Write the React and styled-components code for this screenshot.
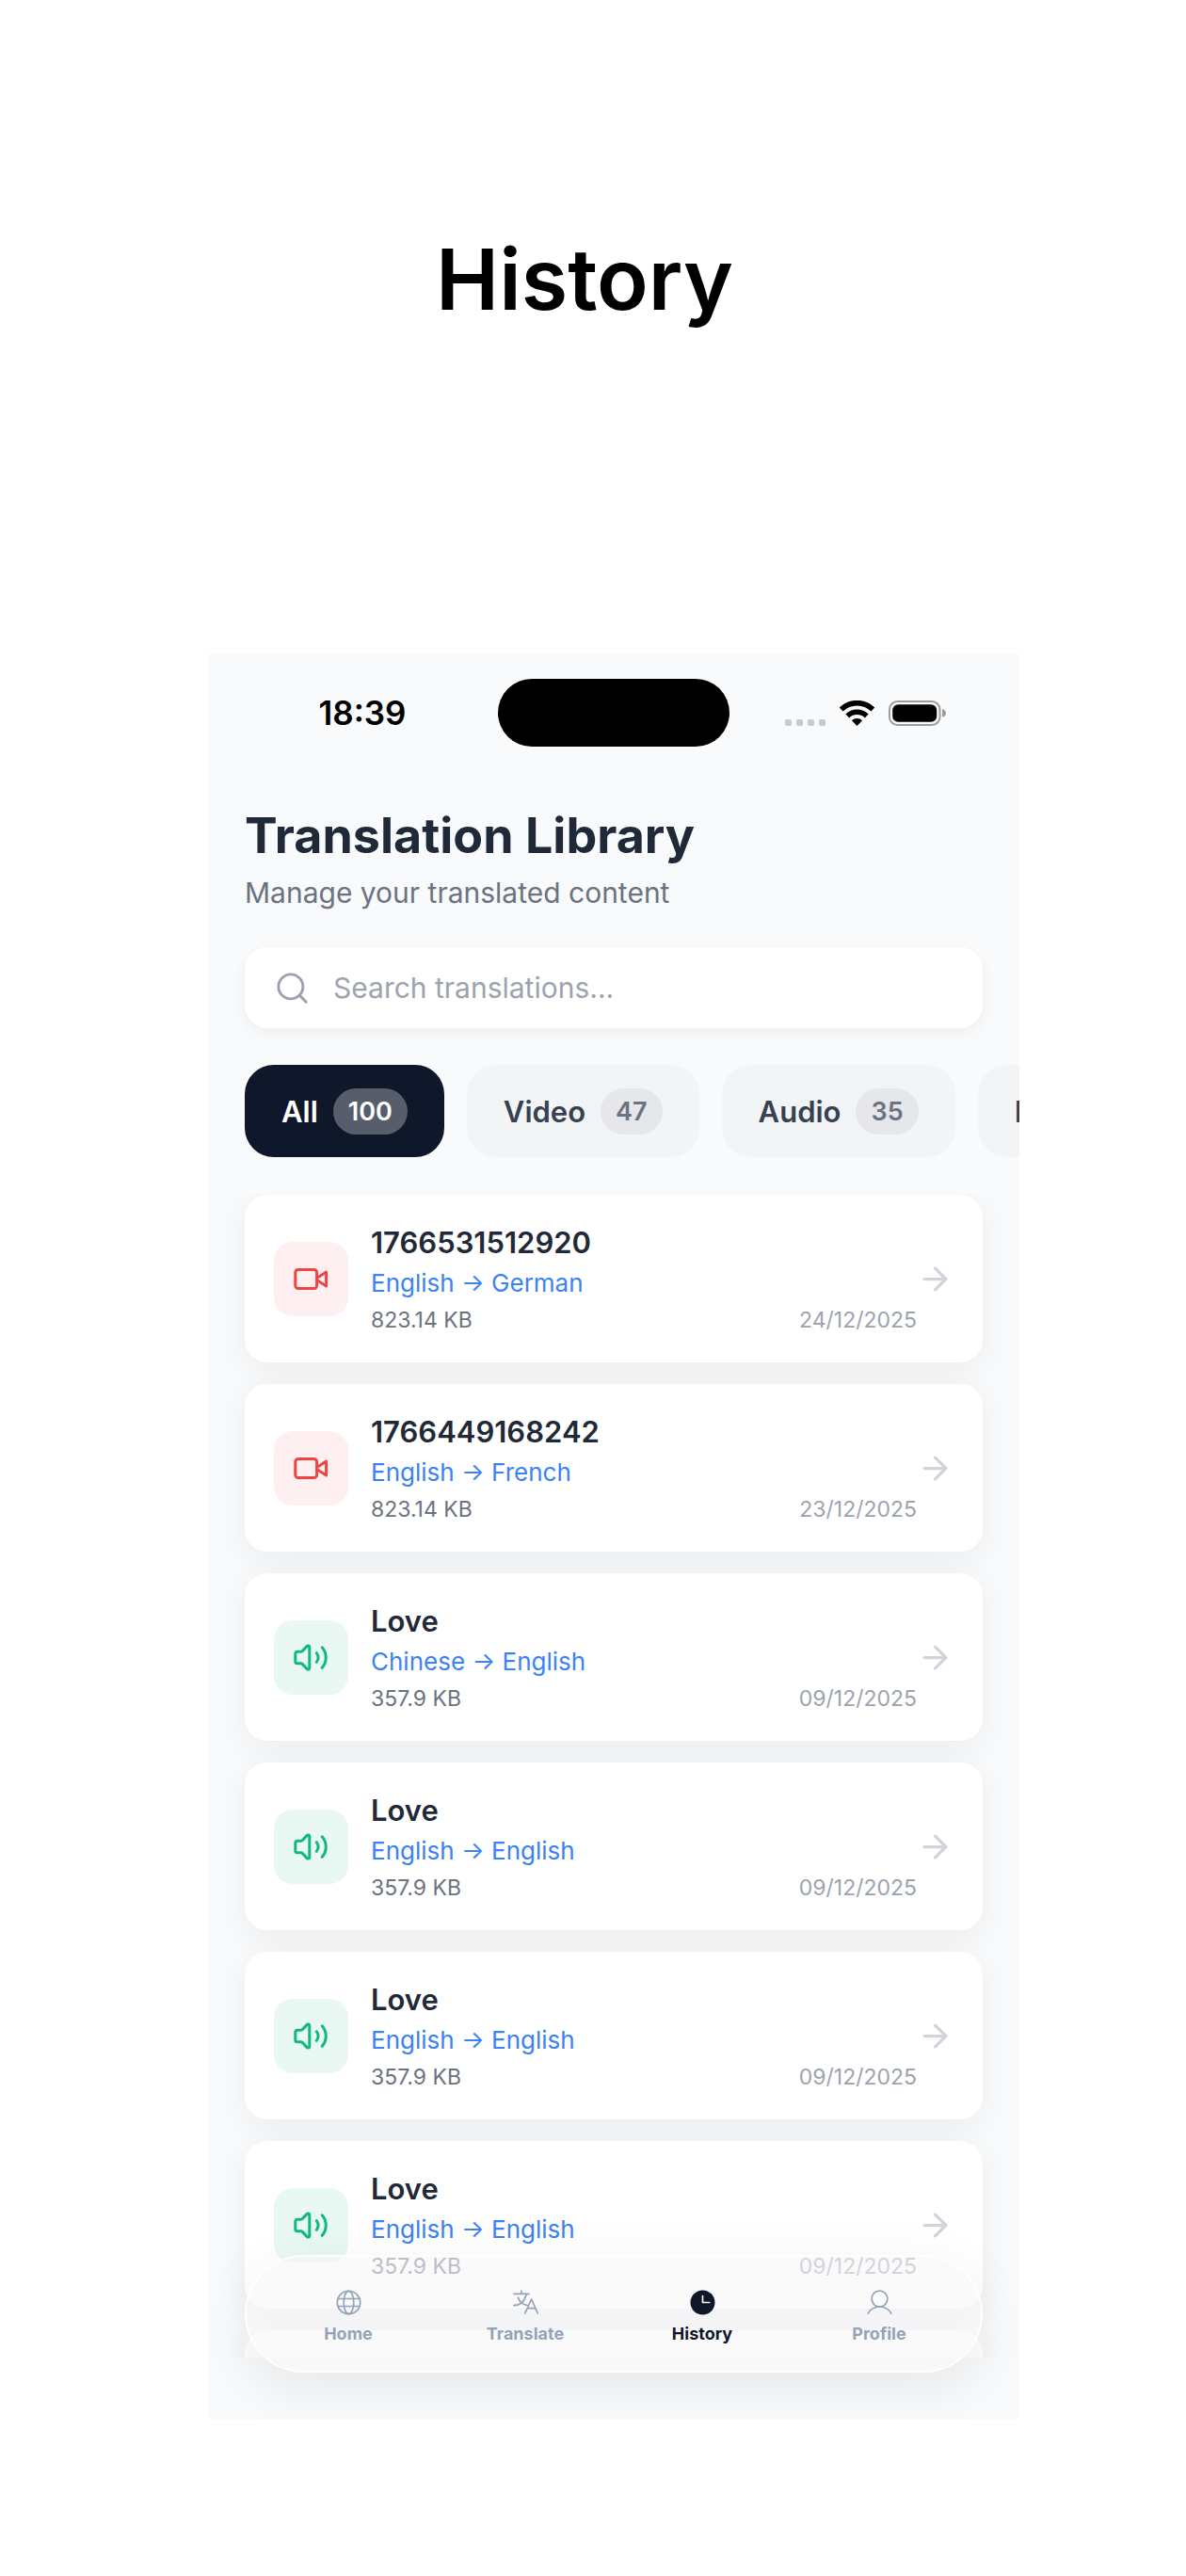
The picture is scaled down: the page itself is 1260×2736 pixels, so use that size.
import React, { useState } from 'react';
import styled, { createGlobalStyle, ThemeProvider } from 'styled-components';
import { ArrowRight, Search } from 'lucide-react';

const theme = {
    body: '#f9fafc',
    ink: '#1f2937',
    navy: '#0f172a',
    muted: '#6b7280',
    faint: '#9ca3af',
    slate: '#94a3b8',
    blue: '#3b82f6',
    size: ['18px', '23px', '26px', '30px', '31px', '35px', '52px', '90px'],
    kinds: {
        video: { color: '#ef4444', background: '#feeff0' },
        audio: { color: '#10b981', background: '#e9f8f3' },
    },
}

const GlobalStyle = createGlobalStyle`
    * {
        box-sizing: border-box;
    }
    body {
        margin: 0;
        background: #fff;
        font-family: Inter, "Liberation Sans", sans-serif;
    }
    button, input {
        font-family: inherit;
        border: 0;
    }
    svg {
        display: block;
        flex-shrink: 0;
    }
`

const Page = styled.div`
    padding: 244px 177px 167px 221px;
`

const PageTitle = styled.h1`
    margin: 0 62px 344px 0;
    font-size: ${p => p.theme.size[7]};
    line-height: 106px;
    font-weight: 600;
    text-align: center;
    color: #000;
`

const Screen = styled.main`
    position: relative;
    overflow: hidden;
    padding-bottom: 65px;
    background: ${p => p.theme.body};
`

const StatusBar = styled.div`
    display: grid;
    grid-template-columns: 1fr 246px 1fr;
    align-items: center;
    padding-top: 27px;
`

const Time = styled.span`
    padding-left: 20px;
    text-align: center;
    font-size: ${p => p.theme.size[5]};
    font-weight: 600;
    color: #000;
`

const Island = styled.div`
    height: 72px;
    border-radius: 36px;
    background: #000;
`

const StatusIcons = styled.div`
    display: flex;
    justify-content: center;
    align-items: flex-end;
    gap: 15px;
    padding-right: 20px;
`

const Signal = styled.div`
    display: flex;
    gap: 5px;
    span {
        width: 7px;
        height: 7px;
        border-radius: 2px;
        background: #c9cacc;
    }
`

const Head = styled.header`
    display: flex;
    flex-direction: column;
    gap: 8px;
    padding: 62px 39px 39px;
`

const Title = styled.h2`
    margin: 0;
    font-size: ${p => p.theme.size[6]};
    line-height: 66px;
    font-weight: 700;
    color: ${p => p.theme.ink};
`

const SubTitle = styled.p`
    margin: 0;
    font-size: ${p => p.theme.size[3]};
    line-height: 38px;
    color: ${p => p.theme.muted};
`

const SearchBox = styled.label`
    display: flex;
    align-items: center;
    gap: 24px;
    height: 86px;
    margin: 0 39px;
    padding: 0 31px;
    border-radius: 24px;
    background: #fff;
    color: ${p => p.theme.faint};
    box-shadow: 0 4px 16px rgba(0, 0, 0, .05);
`

const SearchInput = styled.input`
    flex: 1;
    min-width: 0;
    padding: 0;
    outline: none;
    background: transparent;
    font-size: ${p => p.theme.size[3]};
    color: ${p => p.theme.ink};
    &::placeholder {
        color: ${p => p.theme.faint};
        opacity: 1;
    }
`

const Filters = styled.div`
    display: flex;
    gap: 24px;
    padding: 39px 39px 40px;
    overflow: hidden;
`

const Chip = styled.button`
    display: flex;
    flex-shrink: 0;
    align-items: center;
    gap: 16px;
    height: 98px;
    padding: 0 39px;
    border-radius: 31px;
    font-size: ${p => p.theme.size[4]};
    font-weight: 600;
    background: ${p => p.$active ? p.theme.navy : '#f3f4f6'};
    color: ${p => p.$active ? '#fff' : '#374151'};
`

const Count = styled.span`
    padding: 0 16px;
    border-radius: 25px;
    font-size: 27px;
    line-height: 49px;
    background: ${p => p.$active ? 'rgba(255, 255, 255, .3)' : '#e5e7eb'};
    color: ${p => p.$active ? '#fff' : p.theme.muted};
`

const List = styled.ul`
    display: flex;
    flex-direction: column;
    gap: 23px;
    max-height: 1235px;
    margin: 0;
    padding: 0 39px;
    overflow-y: auto;
    list-style: none;
    scrollbar-width: none;
`

const Card = styled.li`
    display: flex;
    flex-shrink: 0;
    align-items: center;
    padding: 0 31px;
    border-radius: 24px;
    background: #fff;
    box-shadow: 0 8px 36px rgba(0, 0, 0, .06);
`

const Tile = styled.div`
    display: grid;
    place-items: center;
    width: 79px;
    height: 79px;
    margin-right: 24px;
    border-radius: 20px;
    color: ${p => p.theme.kinds[p.$kind].color};
    background: ${p => p.theme.kinds[p.$kind].background};
`

const Info = styled.div`
    display: flex;
    flex: 1;
    flex-direction: column;
    gap: 7px;
    padding: 32px 0 30px;
`

const Name = styled.span`
    font-size: ${p => p.theme.size[4]};
    line-height: 38px;
    font-weight: 600;
    color: ${p => p.theme.ink};
`

const Route = styled.span`
    font-size: ${p => p.theme.size[2]};
    line-height: 34px;
    color: ${p => p.theme.blue};
`

const Meta = styled.div`
    display: flex;
    justify-content: space-between;
    font-size: ${p => p.theme.size[1]};
    line-height: 30px;
    color: ${p => p.theme.muted};
    time {
        color: ${p => p.theme.faint};
    }
`

const TabBar = styled.nav`
    position: absolute;
    left: 39px;
    right: 39px;
    bottom: 49px;
    display: flex;
    height: 125px;
    padding: 0 14px;
    border: 2px solid rgba(255, 255, 255, .8);
    border-radius: 63px;
    background: rgba(246, 247, 248, .58);
    box-shadow: 0 16px 60px rgba(0, 0, 0, .08);
`

const Tab = styled.a`
    display: flex;
    flex: 1;
    flex-direction: column;
    align-items: center;
    gap: 8px;
    padding-top: 35px;
    font-size: ${p => p.theme.size[0]};
    line-height: 24px;
    font-weight: 700;
    text-decoration: none;
    color: ${p => p.$active ? p.theme.navy : p.theme.slate};
`

const Line = ({ w = 27, h = 27, s = 2, children }) => (
    <svg width={w} height={h} viewBox={`0 0 ${w} ${h}`} fill="none" stroke="currentColor"
        strokeWidth={s} strokeLinecap="round" strokeLinejoin="round" aria-hidden="true">
        {children}
    </svg>
)

const VideoIcon = () => (
    <Line w={39} h={39} s={3}>
        <rect x="2.8" y="9.5" width="22.8" height="20" rx="3" />
        <path d="M26 18.2 35.6 12v15L26 20.8" />
    </Line>
)

const AudioIcon = () => (
    <Line w={39} h={39} s={3}>
        <path d="M4.8 13.3h3.7c.8 0 1.5-.3 2-.9l4.7-5c.9-.9 2.6-.5 2.6.9v22.4c0 1.4-1.7 1.8-2.6.9l-4.7-5c-.5-.6-1.2-.9-2-.9H4.8a2 2 0 0 1-2-2v-8.4a2 2 0 0 1 2-2Z" />
        <path d="M25.3 14.6c2.2 3.1 2.2 6.7 0 9.8" />
        <path d="M31.2 8.8c5.4 6 5.4 15.5 0 21.5" />
    </Line>
)

const Wifi = () => (
    <svg width="37" height="27" viewBox="0 0 37 27" fill="none" stroke="#000" strokeWidth="5.6" aria-hidden="true">
        <path d="M1.6 9.5a24.3 24.3 0 0 1 33.8 0" />
        <path d="M8.3 16.4a14.7 14.7 0 0 1 20.4 0" />
        <path d="M18.5 27 12.9 21.2a8 8 0 0 1 11.2 0Z" fill="#000" stroke="none" />
    </svg>
)

const Battery = () => (
    <svg width="61" height="27" viewBox="0 0 61 27" aria-hidden="true">
        <rect x="1" y="1" width="53.5" height="25" rx="8.5" fill="none" stroke="#9b9c9d" strokeWidth="2" />
        <rect x="4.2" y="4.2" width="47" height="18.6" rx="6" fill="#000" />
        <path d="M57 9.3c2.6.6 4 2.1 4 4.2s-1.4 3.6-4 4.2Z" fill="#9b9c9d" />
    </svg>
)

const HomeIcon = () => (
    <Line s={1.7}>
        <circle cx="13.5" cy="13.5" r="12.2" />
        <ellipse cx="13.5" cy="13.5" rx="5.3" ry="12.2" />
        <path d="M1.9 9.5h23.2M1.9 17.5h23.2" />
    </Line>
)

const TranslateIcon = () => (
    <Line s={1.7}>
        <path d="M.9 4.3h16.2M8.8 1.2v3.1M14.2 4.3C13 10.6 9.2 16.3.9 16.6" />
        <path d="M5.4 8.2c1.3 4 4.2 7.3 9.8 8.3" />
        <path d="M12.8 24.8 19.6 10l6.6 14.8M15.4 19.6h8.4" />
    </Line>
)

const HistoryIcon = () => (
    <Line s={1.7}>
        <circle cx="13.5" cy="13.5" r="13" fill="currentColor" stroke="none" />
        <path d="M13.5 6.5v7h7.2" stroke="#f5f5f6" />
    </Line>
)

const ProfileIcon = () => (
    <Line s={1.7}>
        <circle cx="13.5" cy="9.6" r="8.4" />
        <path d="M1.3 25.2c5-9.6 19.4-9.6 24.4 0" />
    </Line>
)

const filters = [
    { label: 'All', count: 100 },
    { label: 'Video', count: 47 },
    { label: 'Audio', count: 35 },
    { label: 'Image', count: 18 },
]

const items = [
    { kind: 'video', name: '1766531512920', from: 'English', to: 'German', size: '823.14 KB', date: '24/12/2025' },
    { kind: 'video', name: '1766449168242', from: 'English', to: 'French', size: '823.14 KB', date: '23/12/2025' },
    { kind: 'audio', name: 'Love', from: 'Chinese', to: 'English', size: '357.9 KB', date: '09/12/2025' },
    { kind: 'audio', name: 'Love', from: 'English', to: 'English', size: '357.9 KB', date: '09/12/2025' },
    { kind: 'audio', name: 'Love', from: 'English', to: 'English', size: '357.9 KB', date: '09/12/2025' },
    { kind: 'audio', name: 'Love', from: 'English', to: 'English', size: '357.9 KB', date: '09/12/2025' },
    { kind: 'audio', name: 'Love', from: 'English', to: 'English', size: '357.9 KB', date: '09/12/2025' },
]

const tabs = [
    { label: 'Home', Icon: HomeIcon },
    { label: 'Translate', Icon: TranslateIcon },
    { label: 'History', Icon: HistoryIcon },
    { label: 'Profile', Icon: ProfileIcon },
]

const Item = ({ kind, name, from, to, size, date }) => (
    <Card>
        <Tile $kind={kind}>{kind === 'video' ? <VideoIcon /> : <AudioIcon />}</Tile>
        <Info>
            <Name>{name}</Name>
            <Route>{from} → {to}</Route>
            <Meta>
                <span>{size}</span>
                <time>{date}</time>
            </Meta>
        </Info>
        <ArrowRight size={39} color="#d1d5db" strokeWidth={2} />
    </Card>
)

export default function App() {
    const [filter, setFilter] = useState('All')

    return (
        <ThemeProvider theme={theme}>
            <GlobalStyle />
            <Page>
                <PageTitle>History</PageTitle>
                <Screen>
                    <StatusBar>
                        <Time>18:39</Time>
                        <Island />
                        <StatusIcons>
                            <Signal><span /><span /><span /><span /></Signal>
                            <Wifi />
                            <Battery />
                        </StatusIcons>
                    </StatusBar>
                    <Head>
                        <Title>Translation Library</Title>
                        <SubTitle>Manage your translated content</SubTitle>
                    </Head>
                    <SearchBox>
                        <Search size={39} strokeWidth={1.8} />
                        <SearchInput type="text" aria-label="Search translations" placeholder="Search translations..." />
                    </SearchBox>
                    <Filters>
                        {filters.map(({ label, count }) => (
                            <Chip key={label} type="button" $active={label === filter} onClick={() => setFilter(label)}>
                                {label}
                                <Count $active={label === filter}>{count}</Count>
                            </Chip>
                        ))}
                    </Filters>
                    <List>
                        {items.map((item, i) => <Item key={i} {...item} />)}
                    </List>
                    <TabBar>
                        {tabs.map(({ label, Icon }) => (
                            <Tab key={label} href={`#${label.toLowerCase()}`} $active={label === 'History'}>
                                <Icon />
                                {label}
                            </Tab>
                        ))}
                    </TabBar>
                </Screen>
            </Page>
        </ThemeProvider>
    )
}
